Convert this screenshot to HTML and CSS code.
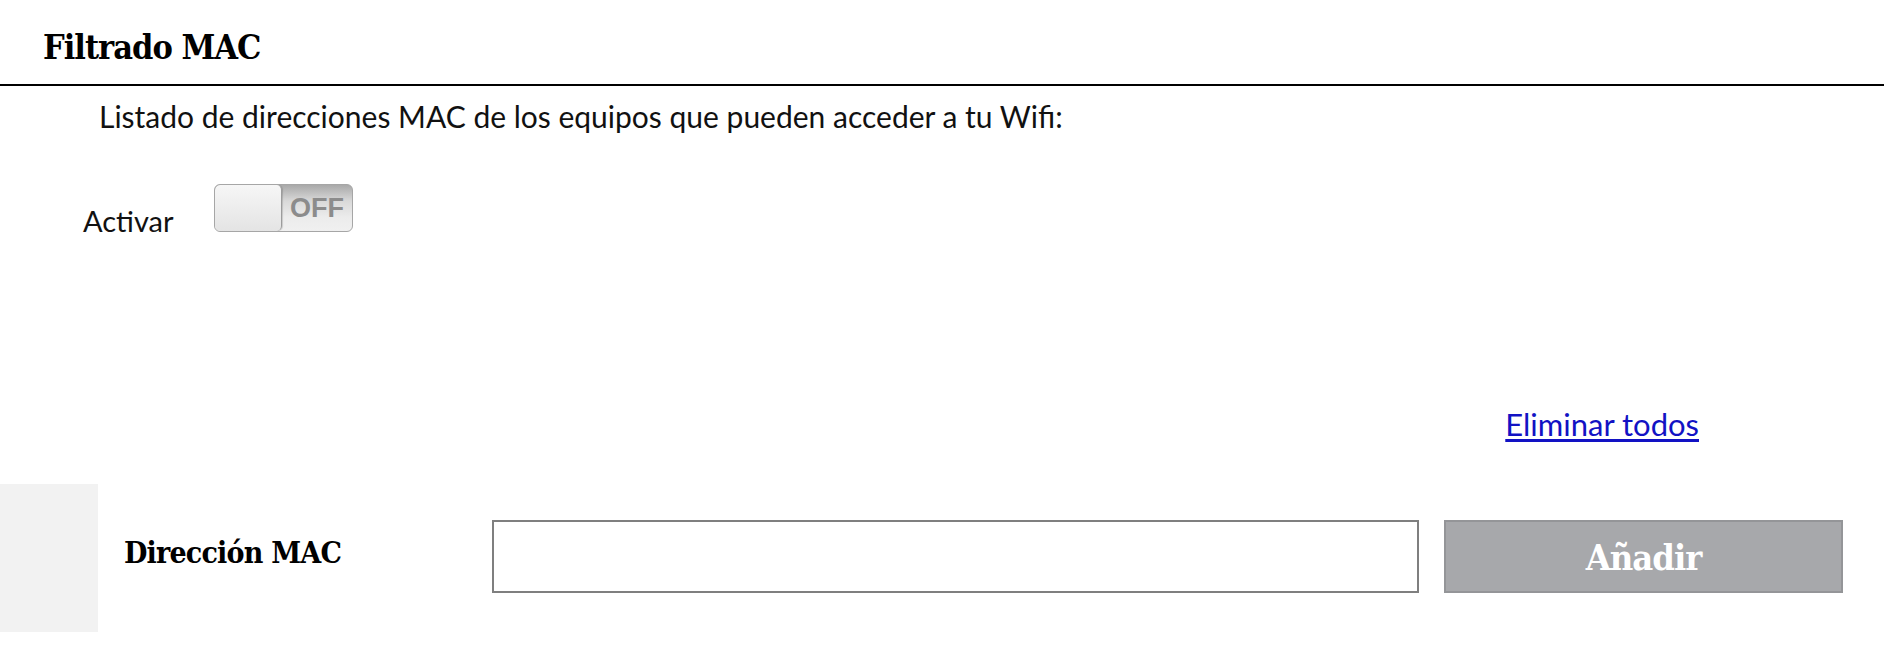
FILE: index.html
```html
<!DOCTYPE html>
<html lang="es">
<head>
    <meta charset="UTF-8">
    <meta name="viewport" content="width=device-width, initial-scale=1.0">
    <title>Filtrado MAC</title>
    <link rel="stylesheet" href="styles.css">
</head>
<body>
    <div class="section-header">
        <h1 class="section-title">Filtrado MAC</h1>
    </div>

    <p class="description">Listado de direcciones MAC de los equipos que pueden acceder a tu Wifi:</p>

    <div class="activate-row">
        <span class="activate-label">Activar</span>
        <div class="switch">
            <div class="switch-knob"></div>
            <span class="switch-text">OFF</span>
        </div>
    </div>

    <div class="actions-row">
        <a href="#" class="remove-all">Eliminar todos</a>
    </div>

    <div class="mac-row">
        <div class="mac-side"></div>
        <label class="mac-label" for="macInput">Dirección MAC</label>
        <input type="text" id="macInput" class="mac-input">
        <button class="add-button" disabled>Añadir</button>
    </div>
</body>
</html>
```

FILE: styles.css
```css
* {
    margin: 0;
    padding: 0;
    box-sizing: border-box;
}

body {
    font-family: Lato, 'Noto Sans', sans-serif;
    font-size: 30px;
    color: #111;
    background: #fff;
}

.section-header {
    height: 86px;
    padding: 30px 0 0 43px;
    border-bottom: 2px solid #000;
}

.section-title {
    font-family: 'DejaVu Serif Condensed', 'DejaVu Serif', serif;
    font-stretch: condensed;
    font-size: 34px;
    font-weight: 700;
    letter-spacing: -1px;
    line-height: 1;
    color: #000;
}

.description {
    margin: 15px 0 0 99px;
    line-height: 30px;
}

.activate-row {
    display: flex;
    align-items: flex-end;
    margin: 53px 0 0 83px;
    height: 48px;
}

.activate-label {
    width: 131px;
    font-size: 29px;
    line-height: 29px;
    margin-bottom: -3px;
}

.switch {
    width: 139px;
    height: 48px;
    display: flex;
    align-items: center;
    border: 1px solid #a6a6a6;
    border-radius: 6px;
    background: linear-gradient(to bottom, #a9a9a9 0%, #d9d9d9 35%, #ececec 70%, #f0f0f0 100%);
    overflow: hidden;
}

.switch-knob {
    width: 67px;
    height: 100%;
    border-right: 1px solid #9c9c9c;
    border-radius: 5px;
    background: linear-gradient(to bottom, #f6f6f6 0%, #e4e4e4 100%);
    box-shadow: 1px 0 1px rgba(0, 0, 0, 0.15);
}

.switch-text {
    flex: 1;
    text-align: center;
    font-family: 'Liberation Sans', Arial, sans-serif;
    font-size: 27px;
    font-weight: 700;
    color: #8c8c8c;
    line-height: 1;
}

.actions-row {
    display: flex;
    justify-content: flex-end;
    margin-top: 177px;
    padding-right: 185px;
    font-size: 31px;
    line-height: 31px;
}

.remove-all {
    color: #1212c4;
    text-decoration: underline;
    text-underline-offset: 3px;
}

.mac-row {
    display: flex;
    align-items: center;
    margin-top: 44px;
    height: 148px;
}

.mac-side {
    width: 98px;
    height: 100%;
    background: #f2f2f2;
}

.mac-label {
    width: 394px;
    padding-left: 26px;
    padding-bottom: 12px;
    font-family: 'DejaVu Serif Condensed', 'DejaVu Serif', serif;
    font-stretch: condensed;
    font-size: 30px;
    font-weight: 700;
    letter-spacing: -0.8px;
    color: #000;
}

.mac-input {
    width: 927px;
    height: 73px;
    margin-top: -3px;
    border: 2px solid #7f7f7f;
    background: #fff;
    font-size: 24px;
    padding: 0 12px;
}

.add-button {
    width: 399px;
    height: 73px;
    margin: -3px 0 0 25px;
    border: 2px solid #949598;
    background: #a7a8ab;
    color: #fff;
    font-family: 'DejaVu Serif Condensed', 'DejaVu Serif', serif;
    font-stretch: condensed;
    font-size: 36px;
    font-weight: 700;
    letter-spacing: -1px;
}
```
